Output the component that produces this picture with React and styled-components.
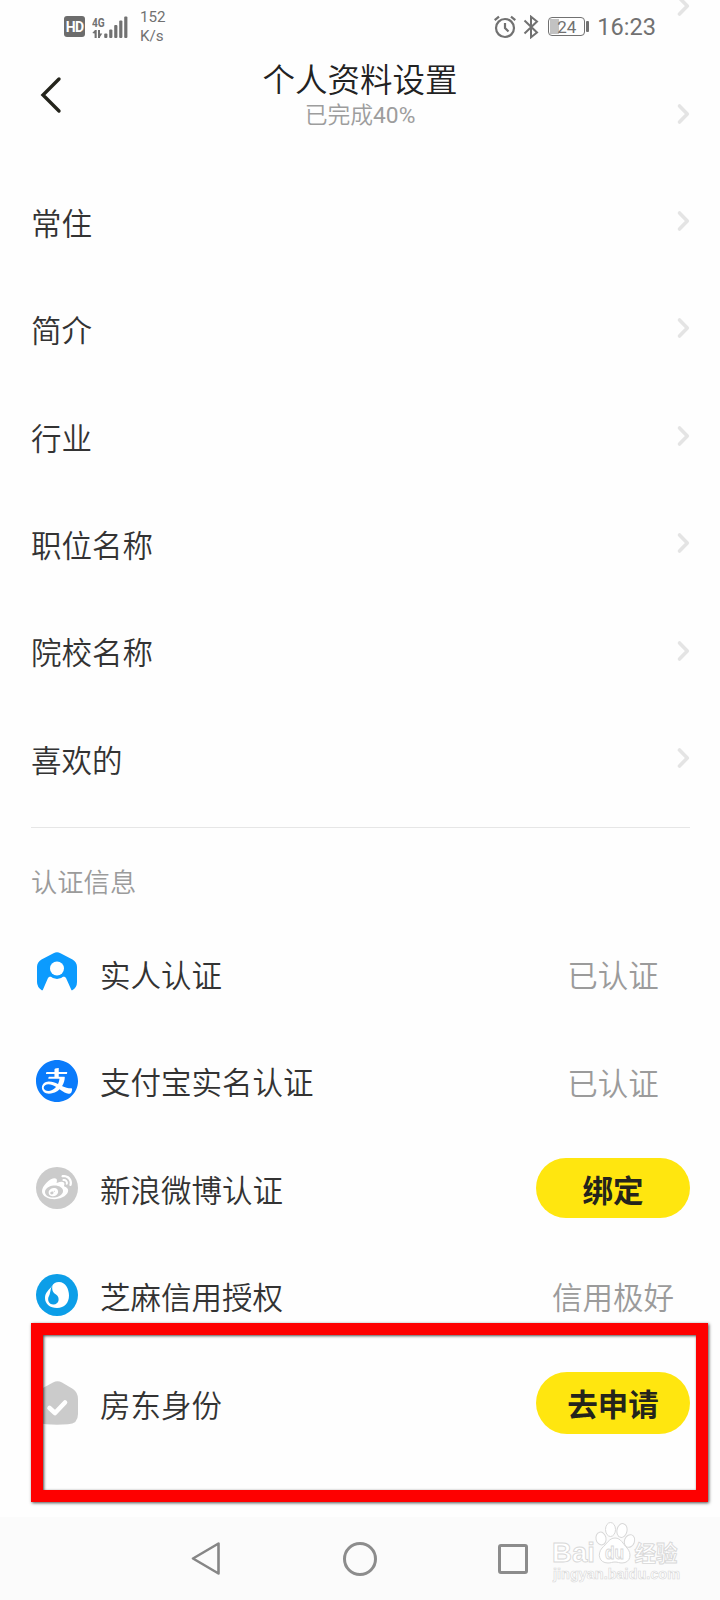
import styled, { createGlobalStyle } from "styled-components";
import { AiFillAlipayCircle } from "react-icons/ai";
import { FaWeibo } from "react-icons/fa";

const profileRows = ["", "", "常住", "简介", "行业", "职位名称", "院校名称", "喜欢的"];

const certRows = [
    { name: "实人认证", icon: <PersonIcon />, status: "已认证" },
    { name: "支付宝实名认证", icon: <AlipayIcon />, status: "已认证" },
    { name: "新浪微博认证", icon: <WeiboIcon />, action: "绑定" },
    { name: "芝麻信用授权", icon: <ZhimaIcon />, status: "信用极好" },
    { name: "房东身份", icon: <HouseIcon />, action: "去申请", tall: true },
];

function PersonIcon() {
    return (
        <svg width="42" height="42" viewBox="0 0 42 42">
            <path
                d="M17.5 1.2Q21 -0.6 24.5 1.2L36.5 7.6Q41 10.2 41 15V30Q41 35.5 36.3 38.3L35.5 38.2L30 26Q29.3 24.5 27.5 24.5H14.5Q12.700 24.5 12 26L6.7 38.2L5.7 38.2Q1 35 1 30V15Q1 10.2 5.5 7.6Z"
                fill="#0c9bfe"
            />
            <circle cx="21" cy="17" r="10" fill="#0c9bfe" />
            <circle cx="21" cy="16.5" r="7" fill="#fff" />
        </svg>
    );
}

function AlipayIcon() {
    return (
        <AlipayBox>
            <AiFillAlipayCircle size={48} color="#0a7bfb" />
        </AlipayBox>
    );
}

function WeiboIcon() {
    return (
        <Disc $color="#cbcbcb">
            <FaWeibo size={30} color="#fff" />
        </Disc>
    );
}

function ZhimaIcon() {
    return (
        <svg width="42" height="42" viewBox="0 0 42 42">
            <circle cx="21" cy="21" r="21" fill="#0c9ee8" />
            <path d="M23 8C29.5 8 33 15 33 21.5C33 29 28.5 34 21 34C14 34 9 30 9 24C9 18.5 13 16 16 12C17.5 9.5 19.5 8 23 8Z" fill="#fff" />
            <path d="M16.5 11C15.5 16 17 18.500 20 20.500C24.500 23.500 23 30.500 17.500 30.500C12.500 30.500 11 25.500 13 22C14.800 18.500 14 15 16.500 11Z" fill="#0c9ee8" />
        </svg>
    );
}

function HouseIcon() {
    return (
        <svg width="42" height="44" viewBox="0 0 42 44">
            <path
                d="M17 1.5Q21.5 -0.8 26 1.5L37 8Q42 11.5 42 18V33Q42 43 32 43.3Q21 44 10 43.3Q0 43 0 33V18Q0 11.5 5 8Z"
                fill="#cbcbcb"
            />
            <path d="M13.5 27L19 32L29 21.5" fill="none" stroke="#fff" strokeWidth="4.6" strokeLinecap="round" strokeLinejoin="round" />
        </svg>
    );
}

function SignalIcon() {
    return (
        <svg width="36" height="24" viewBox="0 0 36 24" fill="#717171">
            <path d="M0.3 18L3 15H4.7V23H2.6V18.5ZM6 15H8V18.5H10.3L8 22V23H6Z" />
            <rect x="12.2" y="18.5" width="3.2" height="4.5" rx="1" />
            <rect x="17.2" y="14.5" width="3.2" height="8.5" rx="1" />
            <rect x="22.2" y="10" width="3.2" height="13" rx="1" />
            <rect x="27.2" y="5.5" width="3.2" height="17.5" rx="1" />
            <rect x="32.2" y="1.5" width="3.2" height="21.5" rx="1" />
        </svg>
    );
}

function AlarmIcon() {
    return (
        <svg width="22" height="24" viewBox="0 0 22 24" fill="none" stroke="#717171" strokeWidth="2.2">
            <circle cx="11" cy="13" r="9" />
            <path d="M11 8V13L14.5 16.5M0.7 5.2L5 1.7M21.3 5.2L17 1.7" />
        </svg>
    );
}

function BluetoothIcon() {
    return (
        <svg width="16" height="24" viewBox="0 0 16 24" fill="none" stroke="#717171" strokeWidth="2">
            <path d="M1.5 5.5L14 17.5L8 22.3V1.7L14 6.5L1.5 18.5" />
        </svg>
    );
}

function Chevron() {
    return (
        <svg width="14" height="22" viewBox="0 0 14 22" fill="none" stroke="#e4e4e4" strokeWidth="3.6">
            <path d="M3.5 3L11.3 11L3.5 19" strokeLinecap="round" strokeLinejoin="round" />
        </svg>
    );
}

function Watermark() {
    return (
        <WatermarkBox>
            <svg width="132" height="66" viewBox="0 0 132 66" fill="#fff" stroke="#d8d8d8" strokeWidth="1">
                <ellipse cx="49" cy="19.5" rx="5" ry="6.5" transform="rotate(-12 49 19.5)" />
                <ellipse cx="58.5" cy="10.5" rx="5" ry="7" />
                <ellipse cx="70" cy="11.5" rx="5" ry="7" transform="rotate(12 70 11.5)" />
                <ellipse cx="77.5" cy="22" rx="5" ry="6.5" transform="rotate(20 77.5 22)" />
                <path d="M63 19C69 19 71 25 75 29C80 34 79 44 70 44C67 44 66 43 63 43C60 43 59 44 56 44C47 44 45 35 50 29C55 25 57 19 63 19Z" />
                <WatermarkText x="0" y="42.5" $size={28} textLength="43" lengthAdjust="spacingAndGlyphs">Bai</WatermarkText>
                <WatermarkText x="53" y="40" $size={18} textLength="19" lengthAdjust="spacingAndGlyphs">du</WatermarkText>
                <WatermarkText x="82.5" y="41.5" $size={21.5}>经验</WatermarkText>
                <WatermarkText x="1" y="60" $size={14} $thin textLength="127" lengthAdjust="spacingAndGlyphs">jingyan.baidu.com</WatermarkText>
            </svg>
        </WatermarkBox>
    );
}

function App() {
    return (
        <Page>
            <GlobalStyle />
            <Header>
                <StatusBar>
                    <HdBadge>HD</HdBadge>
                    <Network>
                        <NetworkType>4G</NetworkType>
                        <SignalIcon />
                    </Network>
                    <Speed>152<br />K/s</Speed>
                    <Spacer />
                    <StatusIcons>
                        <AlarmIcon />
                        <BluetoothIcon />
                    </StatusIcons>
                    <Battery><BatteryLevel>24</BatteryLevel></Battery>
                    <BatteryTip />
                    <Clock>16:23</Clock>
                </StatusBar>
                <TitleBar>
                    <BackButton>
                        <svg width="22" height="38" viewBox="0 0 22 38" fill="none" stroke="#24241c" strokeWidth="3.4">
                            <path d="M19 3L3 19L19 35" strokeLinecap="round" />
                        </svg>
                    </BackButton>
                    <Titles>
                        <Title>个人资料设置</Title>
                        <Subtitle>已完成<Percent>40%</Percent></Subtitle>
                    </Titles>
                </TitleBar>
            </Header>

            <Content>
                {profileRows.map((label, i) => (
                    <Row key={i}>
                        <Label>{label}</Label>
                        <Chevron />
                    </Row>
                ))}
                <Divider />
                <SectionTitle>认证信息</SectionTitle>
                {certRows.map((row) => (
                    <Row key={row.name}>
                        <IconSlot>{row.icon}</IconSlot>
                        <Label>{row.name}</Label>
                        {row.action
                            ? <ActionButton $tall={row.tall}>{row.action}</ActionButton>
                            : <Status>{row.status}</Status>}
                    </Row>
                ))}
            </Content>

            <Highlight />

            <NavBar>
                <svg width="30" height="34" viewBox="0 0 30 34" fill="none" stroke="#868686" strokeWidth="2.6" strokeLinejoin="round">
                    <path d="M2 16.5L27.5 1.5V31.5Z" />
                </svg>
                <NavCircle />
                <NavSquare />
                <Watermark />
            </NavBar>
        </Page>
    );
}

const GlobalStyle = createGlobalStyle`
    body {
        margin: 0;
        background: #fefefe;
        font-family: Roboto, "Noto Sans CJK SC", sans-serif;
        color: #333;
    }
`;

const Page = styled.div`
    position: relative;
    display: flex;
    flex-direction: column;
    width: 720px;
    height: 1600px;
    overflow: hidden;
    background: #fefefe;
`;

const Header = styled.header`
    position: absolute;
    top: 0;
    left: 0;
    width: 720px;
    z-index: 1;
`;

const StatusBar = styled.div`
    display: flex;
    align-items: center;
    height: 53px;
    padding: 0 64px;
    color: #717171;
`;

const HdBadge = styled.span`
    width: 21px;
    height: 21px;
    border-radius: 3px;
    background: #6c6c6c;
    color: #fff;
    font-size: 14px;
    font-weight: 700;
    line-height: 22px;
    text-align: center;
    letter-spacing: -0.8px;
`;

const Network = styled.div`
    position: relative;
    display: flex;
    margin-left: 7px;
`;

const NetworkType = styled.span`
    position: absolute;
    top: 1px;
    left: 0;
    font-size: 13.5px;
    font-weight: 700;
    line-height: 12px;
    transform: scaleX(0.75);
    transform-origin: left;
`;

const Speed = styled.span`
    margin-left: 12px;
    font-size: 15.2px;
    line-height: 19px;
`;

const Spacer = styled.div`
    flex: 1;
`;

const StatusIcons = styled.div`
    display: flex;
    gap: 7px;
`;

const Battery = styled.span`
    display: flex;
    width: 37px;
    height: 19px;
    box-sizing: border-box;
    margin-left: 9px;
    padding: 1px;
    border: 1.5px solid #717171;
    border-radius: 4px;
`;

const BatteryLevel = styled.span`
    flex: 1;
    background: linear-gradient(90deg, #c2c2c2 28%, transparent 28%);
    font-size: 17px;
    line-height: 16px;
    text-align: center;
`;

const BatteryTip = styled.span`
    width: 3px;
    height: 11px;
    margin-left: 1px;
    background: #717171;
    border-radius: 1px;
`;

const Clock = styled.span`
    margin-left: 8px;
    font-size: 23.6px;
`;

const TitleBar = styled.div`
    display: flex;
    align-items: flex-start;
    padding-left: 40px;
`;

const BackButton = styled.div`
    width: 22px;
    margin-top: 23px;
`;

const Titles = styled.div`
    flex: 1;
    margin-right: 62px;
    margin-top: 8px;
    text-align: center;
`;

const Title = styled.div`
    font-size: 32.5px;
    font-weight: 350;
    line-height: 40px;
    color: #222;
`;

const Subtitle = styled.div`
    font-size: 22.8px;
    font-weight: 350;
    line-height: 30px;
    color: #9d9d9d;
`;

const Percent = styled.span`
    font-weight: 400;
`;

const Content = styled.main`
    display: flex;
    flex-direction: column;
    margin-top: -47.5px;
    padding: 0 30px 0 31px;
`;

const Row = styled.div`
    display: flex;
    align-items: center;
    height: 107.4px;
    flex-shrink: 0;
`;

const Label = styled.span`
    flex: 1;
    padding-top: 7.5px;
    font-size: 30.5px;
    font-weight: 350;
    line-height: 44px;
`;

const Divider = styled.hr`
    width: 100%;
    height: 1px;
    margin: 15px 0 0;
    border: 0;
    background: #e6e6e6;
`;

const SectionTitle = styled.h2`
    margin: 35px 0 17px;
    font-size: 26.3px;
    font-weight: 350;
    line-height: 40px;
    color: #9b9b9b;
`;

const IconSlot = styled.div`
    display: flex;
    flex-shrink: 0;
    width: 42px;
    margin: 0 22px 0 5px;
`;

const AlipayBox = styled.div`
    display: flex;
    margin: -3px;
`;

const Disc = styled.div`
    display: flex;
    align-items: center;
    justify-content: center;
    width: 42px;
    height: 42px;
    border-radius: 50%;
    background: ${(props) => props.$color};
`;

const Status = styled.span`
    width: 154px;
    padding-top: 8px;
    font-size: 30.5px;
    font-weight: 350;
    line-height: 44px;
    text-align: center;
    color: #9b9b9b;
`;

const ActionButton = styled.button`
    width: 154px;
    height: ${(props) => (props.$tall ? "62px" : "60px")};
    padding: 7px 0 0;
    border: 0;
    border-radius: 31px;
    background: #ffe60f;
    color: #24241c;
    font-family: inherit;
    font-size: 30.5px;
    font-weight: 700;
    line-height: 44px;
`;

const Highlight = styled.div`
    position: absolute;
    left: 31px;
    top: 1323px;
    width: 677px;
    height: 179px;
    box-sizing: border-box;
    border: 12px solid #fe0000;
    box-shadow: 1px 1px 3px rgba(0, 0, 0, 0.7), inset 1px 1px 3px rgba(0, 0, 0, 0.7);
`;

const NavBar = styled.nav`
    display: flex;
    align-items: center;
    height: 83px;
    box-sizing: border-box;
    margin-top: auto;
    padding-left: 191px;
    background: #fbfbfb;
`;

const NavCircle = styled.span`
    width: 34px;
    height: 34px;
    box-sizing: border-box;
    margin: 0 121px 0 122px;
    border: 3px solid #8c8c8c;
    border-radius: 50%;
`;

const NavSquare = styled.span`
    width: 30px;
    height: 30px;
    box-sizing: border-box;
    border: 3px solid #8c8c8c;
    border-radius: 3px;
`;

const WatermarkBox = styled.div`
    display: flex;
    margin-left: 24px;
    margin-bottom: 13px;
`;

const WatermarkText = styled.text`
    font-family: "Liberation Sans", "Noto Sans CJK SC", sans-serif;
    font-size: ${(props) => props.$size}px;
    font-weight: 700;
    stroke-width: ${(props) => (props.$thin ? "0.6px" : "0.9px")};
`;

export default App;
